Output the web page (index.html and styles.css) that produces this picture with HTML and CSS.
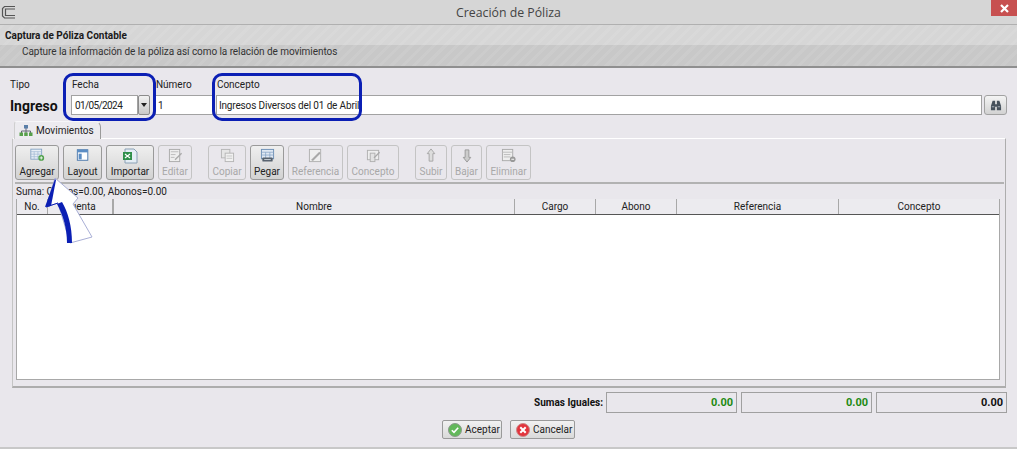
FILE: index.html
```html
<!DOCTYPE html>
<html lang="es">
<head>
    <meta charset="UTF-8">
    <meta name="viewport" content="width=device-width, initial-scale=1.0">
    <title>Creación de Póliza</title>
    <link rel="stylesheet" href="styles.css">
</head>
<body>
    <div id="window">
        <div class="titlebar">
            <svg class="app-icon" width="16" height="16" viewBox="0 0 16 16"><path d="M14 2.500H3.500L1.500 4.500V12L3.500 14H14M14 5H4.500V11.500H14" fill="none" stroke="#555" stroke-width="1.200"/></svg>
            <span class="window-title">Creación de Póliza</span>
            <div class="close-btn">
                <svg width="9" height="9" viewBox="0 0 9 9"><path d="M1 1L8 8M8 1L1 8" stroke="#fff" stroke-width="2.200"/></svg>
            </div>
        </div>

        <div class="banner">
            <div class="banner-top">Captura de Póliza Contable</div>
            <div class="banner-bottom">Capture la información de la póliza así como la relación de movimientos</div>
        </div>

        <div class="form-row">
            <div class="field field-tipo">
                <label>Tipo</label>
                <div class="tipo-value">Ingreso</div>
            </div>
            <div class="field field-fecha">
                <label>Fecha</label>
                <div class="date-box">
                    <div class="input">01/05/2024</div>
                    <div class="combo-btn"><span class="combo-arrow"></span></div>
                </div>
            </div>
            <div class="field field-numero">
                <label>Número</label>
                <div class="input">1</div>
            </div>
            <div class="field field-concepto">
                <label>Concepto</label>
                <div class="input">Ingresos Diversos del 01 de Abril</div>
            </div>
            <div class="search-btn">
                <svg width="12" height="11" viewBox="0 0 14 13"><path d="M3 1H6V5H8V1H11L13 7V12H8V8H6V12H1V7Z" fill="#46515c"/><path d="M2 8H5M9 8H12" stroke="#b8c0c8"/></svg>
            </div>
        </div>

        <div class="tabs">
            <div class="tab">
                <svg width="14" height="11" viewBox="0 0 14 11"><path d="M7 3V6M2.500 8V6H11.500V8M7 6V8" stroke="#667" fill="none"/><rect x="5" y="0" width="4" height="3.500" fill="#5a7fa8"/><rect x="0.500" y="7.500" width="3.500" height="3.500" fill="#57a04a"/><rect x="5.200" y="7.500" width="3.500" height="3.500" fill="#57a04a"/><rect x="10" y="7.500" width="3.500" height="3.500" fill="#57a04a"/></svg>
                Movimientos
            </div>
        </div>

        <div class="panel">
            <div class="toolbar">
                <button class="tool w-agregar">
                    <svg width="15" height="14" viewBox="0 0 18 16"><rect x="1" y="1" width="13" height="12" fill="#e8eef6" stroke="#7f9fc2"/><path d="M1 4H14M5 4V13M9.500 4V13M1 7H14M1 10H14" stroke="#9db6d2" stroke-width="0.800"/><circle cx="13.500" cy="11.500" r="3.500" fill="#4fa14a"/><path d="M11.500 11.500H15.500M13.500 9.500V13.500" stroke="#fff"/></svg>
                    Agregar
                </button>
                <button class="tool w-layout">
                    <svg width="14" height="14" viewBox="0 0 16 15"><rect x="1.500" y="1.500" width="12" height="12" fill="#fff" stroke="#3f6fa6"/><rect x="1.500" y="1.500" width="12" height="3" fill="#5b8dc4"/><rect x="3" y="6" width="3.500" height="6.500" fill="#5b8dc4"/></svg>
                    Layout
                </button>
                <button class="tool w-importar">
                    <svg width="16" height="16" viewBox="0 0 16 16"><path d="M3 1H12L15 4V15H3Z" fill="#e4edf5" stroke="#8aa0b5"/><rect x="1" y="4" width="9" height="8" fill="#2f8f4a"/><path d="M3 6L8 10M8 6L3 10" stroke="#fff" stroke-width="1.200"/></svg>
                    Importar
                </button>
                <button class="tool w-editar off">
                    <svg width="15" height="15" viewBox="0 0 16 16"><rect x="1.500" y="1.500" width="11" height="13" fill="#eee" stroke="#aaa"/><path d="M3 4H11M3 7H8M3 10H7" stroke="#bbb"/><path d="M7 12L14 5L15 6L8 13Z" fill="#aaa"/></svg>
                    Editar
                </button>
                <button class="tool w-copiar off group-start">
                    <svg width="15" height="15" viewBox="0 0 16 16"><rect x="1.500" y="1.500" width="9" height="9" fill="#e6e6e6" stroke="#b5b5b5"/><rect x="5.500" y="5.500" width="9" height="9" fill="#f1f1f1" stroke="#b5b5b5"/><path d="M7 8.500H13M7 11H13" stroke="#c5c5c5"/></svg>
                    Copiar
                </button>
                <button class="tool w-pegar">
                    <svg width="15" height="15" viewBox="0 0 16 16"><rect x="1.500" y="1.500" width="13" height="10" fill="#dfe8f3" stroke="#6d8fb5"/><path d="M1.500 4.500H14.500M6 4.500V11M10.500 4.500V11M1.500 7.500H14.500" stroke="#86a4c6" stroke-width="0.800"/><rect x="2.500" y="10" width="11" height="4.500" rx="1" fill="#56616d"/><path d="M4.500 12.300H11.500" stroke="#c9d0d8"/></svg>
                    Pegar
                </button>
                <button class="tool w-referencia off">
                    <svg width="15" height="15" viewBox="0 0 16 16"><rect x="1.500" y="1.500" width="12" height="13" fill="#eee" stroke="#b0b0b0"/><path d="M4 12L12 4L13.500 5.500L5.500 13.500H4Z" fill="#a8a8a8"/></svg>
                    Referencia
                </button>
                <button class="tool w-concepto off">
                    <svg width="15" height="15" viewBox="0 0 16 16"><rect x="1.500" y="2.500" width="12" height="10" fill="#eee" stroke="#b0b0b0"/><rect x="4.500" y="5.500" width="5" height="9" fill="#e2e2e2" stroke="#b0b0b0"/><path d="M8 10L14 4L15 5L9 11Z" fill="#a8a8a8"/></svg>
                    Concepto
                </button>
                <button class="tool w-subir off group-start">
                    <svg width="10" height="15" viewBox="0 0 10 16"><path d="M5 1L9 6H7V14H3V6H1Z" fill="#ddd" stroke="#a5a5a5"/></svg>
                    Subir
                </button>
                <button class="tool w-bajar off">
                    <svg width="10" height="15" viewBox="0 0 10 16"><path d="M5 15L9 10H7V2H3V10H1Z" fill="#ccc" stroke="#999"/></svg>
                    Bajar
                </button>
                <button class="tool w-eliminar off">
                    <svg width="15" height="15" viewBox="0 0 16 16"><rect x="1.500" y="1.500" width="11" height="12" fill="#eee" stroke="#aaa"/><path d="M1.500 4.500H12.500M3 7H10M3 9.500H10" stroke="#bbb"/><circle cx="12.500" cy="12" r="3" fill="#999"/><path d="M11 12H14" stroke="#fff"/></svg>
                    Eliminar
                </button>
            </div>

            <div class="suma">Suma: Cargos=0.00, Abonos=0.00</div>

            <div class="grid">
                <div class="grid-head">
                    <div class="col c-no">No.</div>
                    <div class="col c-cuenta">Cuenta</div>
                    <div class="col c-nombre">Nombre</div>
                    <div class="col c-cargo">Cargo</div>
                    <div class="col c-abono">Abono</div>
                    <div class="col c-ref">Referencia</div>
                    <div class="col c-con">Concepto</div>
                </div>
            </div>
        </div>

        <div class="totals">
            <span class="totals-label">Sumas Iguales:</span>
            <div class="total green">0.00</div>
            <div class="total green">0.00</div>
            <div class="total">0.00</div>
        </div>

        <div class="actions">
            <button class="action w-aceptar">
                <svg width="14" height="14" viewBox="0 0 14 14"><circle cx="7" cy="7" r="6.500" fill="#62b85a" stroke="#8a9a8a"/><path d="M3.800 7.200L6 9.400L10.200 4.800" fill="none" stroke="#fff" stroke-width="1.600"/></svg>
                Aceptar
            </button>
            <button class="action w-cancelar">
                <svg width="14" height="14" viewBox="0 0 14 14"><circle cx="7" cy="7" r="6.500" fill="#e2343c" stroke="#c88"/><path d="M4.300 4.300L9.700 9.700M9.700 4.300L4.300 9.700" stroke="#fff" stroke-width="2"/></svg>
                Cancelar
            </button>
        </div>

        <!-- marcas de la captura -->
        <div class="mark mark-fecha"></div>
        <div class="mark mark-concepto"></div>
        <svg class="mark-arrow" width="60" height="75" viewBox="0 0 60 75">
            <path d="M13 1L36 21L31 27L50 60L28 66L16 26L4 30Z" fill="#fff" stroke="#a9afd6"/>
            <path d="M13 2L3 30L9 29L14 3Z" fill="#0b1fb4"/>
            <path d="M4 30L16 26" stroke="#0b1fb4"/>
            <path d="M15 27C21 38 25 51 25 66H30C30 49 26 35 20 25Z" fill="#0b1fb4"/>
        </svg>
    </div>
</body>
</html>
```

FILE: styles.css
```css
* {
    box-sizing: border-box;
}
html, body {
    margin: 0;
    height: 100%;
}
body {
    font-family: Roboto, "Noto Sans", sans-serif;
    font-size: 10px;
    color: #222;
    background-color: #e9e7ec;
    overflow: hidden;
}
#window {
    position: relative;
    width: 1017px;
    height: 449px;
    border-bottom: 2px solid #c8c8c8;
}

/* barra de titulo */
.titlebar {
    position: relative;
    height: 25px;
    background-color: #d6d6d6;
    border-bottom: 1px solid #b0b0b0;
    display: flex;
    justify-content: center;
    align-items: center;
}
.app-icon {
    position: absolute;
    left: 1px;
    top: 4px;
}
.window-title {
    font-family: "Open Sans", sans-serif;
    font-size: 12.300px;
    color: #444;
}
.close-btn {
    position: absolute;
    right: 0;
    top: 0;
    width: 26px;
    height: 16px;
    background-color: #c75050;
    display: flex;
    justify-content: center;
    align-items: center;
}

/* encabezado */
.banner {
    height: 43px;
    border-bottom: 2px solid #8f8f8f;
    background-color: #c8c8c8;
    background-image: repeating-linear-gradient(135deg, rgba(255, 255, 255, 0.07) 0 3px, transparent 3px 8px);
}
.banner-top {
    height: 20px;
    padding: 5px 0 0 5px;
    font-weight: bold;
    color: #1a1a1a;
    background-color: rgba(255, 255, 255, 0.25);
}
.banner-bottom {
    padding: 1px 0 0 22px;
    letter-spacing: -0.060px;
    color: #333;
}

/* campos */
.form-row {
    display: flex;
    align-items: flex-end;
    height: 47px;
    padding: 10px 10px 0 10px;
}
.field label {
    display: block;
    height: 16px;
    padding-left: 1px;
}
.field-tipo {
    width: 61px;
}
.field-tipo label {
    padding-left: 0;
}
.tipo-value {
    font-size: 14px;
    font-weight: bold;
    height: 20px;
    line-height: 22px;
    color: #111;
}
.field-fecha {
    width: 79px;
    margin-right: 5px;
}
.date-box {
    display: flex;
}
.input {
    height: 20px;
    line-height: 19px;
    padding-left: 2px;
    letter-spacing: -0.150px;
    background-color: #fff;
    border: 1px solid #a2a2a2;
    white-space: nowrap;
    overflow: hidden;
}
.date-box .input {
    width: 67px;
    padding-left: 3px;
    letter-spacing: -0.600px;
}
.combo-btn {
    width: 12px;
    height: 20px;
    background: linear-gradient(#f2f2f2, #c9c9c9);
    border: 1px solid #8c8c8c;
    border-radius: 2px;
    display: flex;
    justify-content: center;
    align-items: center;
}
.combo-arrow {
    width: 0;
    height: 0;
    border-left: 3.500px solid transparent;
    border-right: 3.500px solid transparent;
    border-top: 4px solid #222;
}
.field-numero {
    width: 58px;
    margin-right: 3px;
}
.field-concepto {
    width: 767px;
    margin-right: 2px;
}
.search-btn {
    width: 23px;
    height: 20px;
    background: linear-gradient(#f4f4f4, #d2d2d2);
    border: 1px solid #a2a2a2;
    border-radius: 3px;
    display: flex;
    justify-content: center;
    align-items: center;
}

/* pestaña */
.tabs {
    height: 23px;
    padding: 6px 0 0 14px;
}
.tab {
    position: relative;
    z-index: 1;
    width: 87px;
    height: 18px;
    padding-left: 4px;
    display: flex;
    align-items: center;
    gap: 3px;
    border-top: 1px solid #f6f6f8;
    border-left: 1px solid #cfcfcf;
    border-right: 1px solid #9a9a9a;
    border-radius: 3px 6px 0 0;
    background-color: #ecebef;
}

/* panel */
.panel {
    width: 994px;
    height: 250px;
    margin-left: 12px;
    padding: 6px 5px 6px 3px;
    border: 1px solid #adadad;
    border-left-color: #c4c4c4;
    border-top: 1px solid #fff;
    border-bottom: 2px solid #adadad;
    display: flex;
    flex-direction: column;
}
.toolbar {
    display: flex;
    gap: 4px;
    height: 39px;
    flex-shrink: 0;
    margin-left: -1px;
    margin-right: -4px;
    border-bottom: 2px solid #b2b2b2;
}
.tool {
    height: 35px;
    padding: 2px 0 2px;
    font-family: inherit;
    font-size: 10px;
    color: #222;
    border: 1px solid #9a9a9a;
    border-radius: 3px;
    background: linear-gradient(#efefef, #d2d2d2);
    display: flex;
    flex-direction: column;
    align-items: center;
    justify-content: space-between;
}
.tool.off {
    color: #a8a8a8;
    border-color: #c4c4c4;
    background: #e9e7ec;
}
.group-start {
    margin-left: 12px;
}
.w-agregar { width: 44px; }
.w-layout { width: 39px; }
.w-importar { width: 48px; }
.w-editar { width: 34px; }
.w-copiar { width: 38px; }
.w-pegar { width: 34px; }
.w-referencia { width: 55px; }
.w-concepto { width: 52px; }
.w-subir { width: 32px; }
.w-bajar { width: 31px; }
.w-eliminar { width: 45px; }

.suma {
    height: 15px;
    line-height: 15px;
    flex-shrink: 0;
}
.grid {
    flex: 1;
    width: 984px;
    background-color: #fff;
    border: 1px solid #a8a8a8;
    border-top: none;
}
.grid-head {
    display: flex;
    height: 16px;
    background-color: #ecebef;
    border-bottom: 1px solid #555;
}
.col {
    text-align: center;
    line-height: 16px;
    border-right: 1px solid #a8a8a8;
}
.col:last-child {
    border-right: none;
}
.c-no { width: 31px; }
.c-cuenta { width: 65px; }
.c-nombre { width: 402px; border-left: 1px solid #a8a8a8; }
.c-cargo { width: 81px; }
.c-abono { width: 81px; }
.c-ref { width: 162px; }
.c-con { flex: 1; }

/* totales */
.totals {
    display: flex;
    justify-content: flex-end;
    align-items: center;
    gap: 4px;
    height: 21px;
    margin-top: 4px;
    padding-right: 10px;
}
.totals-label {
    font-weight: bold;
    color: #111;
    margin-right: -1px;
}
.total {
    width: 131px;
    height: 21px;
    line-height: 20px;
    padding-right: 3px;
    text-align: right;
    font-size: 11px;
    font-weight: bold;
    color: #111;
    border: 1px solid #a0a0a0;
}
.total.green {
    color: #1d8a12;
}
.actions {
    display: flex;
    gap: 8px;
    margin: 7px 0 0 442px;
}
.action {
    height: 19px;
    padding: 0 0 0 5px;
    font-family: inherit;
    font-size: 10px;
    color: #222;
    border: 1px solid #9a9a9a;
    border-radius: 2px;
    background: linear-gradient(#f2f2f2, #d9d9d9);
    display: flex;
    align-items: center;
    gap: 3px;
}
.w-aceptar { width: 60px; }
.w-cancelar { width: 65px; }

/* marcas azules encima de la captura */
.mark {
    position: absolute;
    top: 73px;
    height: 48px;
    border: 3px solid #0b1fb4;
    border-radius: 10px;
}
.mark-fecha {
    left: 63px;
    width: 93px;
}
.mark-concepto {
    left: 212px;
    width: 150px;
}
.mark-arrow {
    position: absolute;
    left: 42px;
    top: 177px;
}
```
